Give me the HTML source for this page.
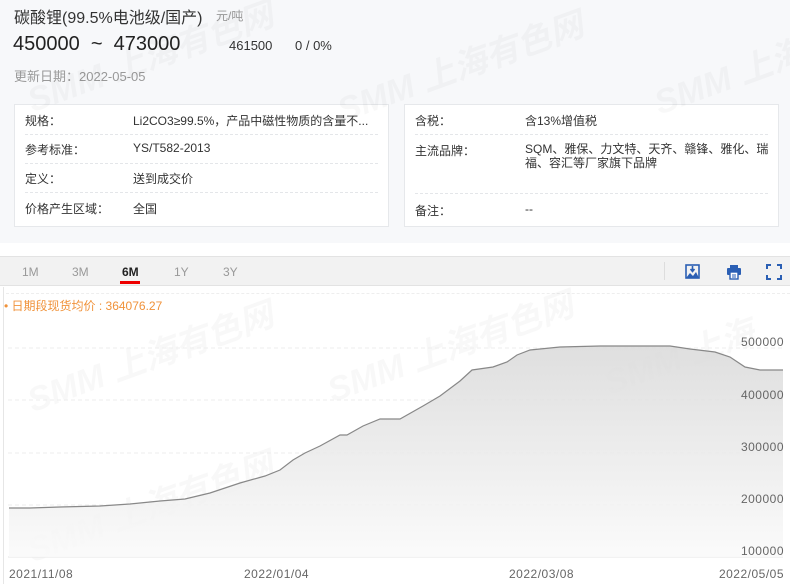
<!DOCTYPE html>
<html><head><meta charset="utf-8"><style>
*{margin:0;padding:0;box-sizing:border-box}
body{width:790px;height:584px;overflow:hidden;background:#fff;font-family:"Liberation Sans","Noto Sans CJK SC",sans-serif;color:#333;position:relative}
.top{position:absolute;left:0;top:0;width:790px;height:243px;background:#f7f8fa}
.abs{position:absolute;white-space:nowrap}
.card{position:absolute;background:#fff;border:1px solid #e6e8eb}
.row{position:absolute;left:10px;right:10px;border-bottom:1px dashed #e4e6e9;font-size:12px;color:#333}
.row span{position:absolute}
.wm{position:absolute;font-weight:bold;font-style:italic;color:rgba(0,0,0,0.028);font-size:34px;transform:rotate(-20deg);white-space:nowrap}
</style></head><body>
<div class="top"></div>
<div class="abs" style="left:14px;top:4px;font-size:16px;color:#333">碳酸锂(99.5%电池级/国产)</div>
<div class="abs" style="left:216px;top:7px;font-size:12px;color:#999">元/吨</div>
<div class="abs" style="left:13px;top:33px;font-size:20px;color:#222">450000 &nbsp;~ &nbsp;473000</div>
<div class="abs" style="left:229px;top:38px;font-size:13px;color:#333">461500</div>
<div class="abs" style="left:295px;top:38px;font-size:13px;color:#333">0 / 0%</div>
<div class="abs" style="left:14px;top:66px;font-size:13px;color:#999">更新日期：2022-05-05</div>

<div class="card" style="left:14px;top:104px;width:375px;height:123px">
<div class="row" style="top:0;height:30px"><span style="left:0;top:7px">规格：</span><span style="left:108px;top:7px">Li2CO3≥99.5%，产品中磁性物质的含量不...</span></div>
<div class="row" style="top:30px;height:29px"><span style="left:0;top:6px">参考标准：</span><span style="left:108px;top:6px">YS/T582-2013</span></div>
<div class="row" style="top:59px;height:29px"><span style="left:0;top:6px">定义：</span><span style="left:108px;top:6px">送到成交价</span></div>
<div class="row" style="top:88px;height:30px;border:none"><span style="left:0;top:7px">价格产生区域：</span><span style="left:108px;top:7px">全国</span></div>
</div>
<div class="card" style="left:404px;top:104px;width:375px;height:123px">
<div class="row" style="top:0;height:30px"><span style="left:0;top:7px">含税：</span><span style="left:110px;top:7px">含13%增值税</span></div>
<div class="row" style="top:30px;height:59px"><span style="left:0;top:7px">主流品牌：</span><span style="left:110px;top:7px;white-space:normal;width:245px;line-height:14px">SQM、雅保、力文特、天齐、赣锋、雅化、瑞福、容汇等厂家旗下品牌</span></div>
<div class="row" style="top:89px;height:30px;border:none"><span style="left:0;top:8px">备注：</span><span style="left:110px;top:8px">--</span></div>
</div>

<div style="position:absolute;left:0;top:256px;width:790px;height:30px;background:#f2f2f2;border-top:1px solid #e3e3e3;border-bottom:1px solid #e3e3e3"></div>
<div class="abs" style="left:22px;top:265px;font-size:12px;color:#999">1M</div>
<div class="abs" style="left:72px;top:265px;font-size:12px;color:#999">3M</div>
<div class="abs" style="left:122px;top:265px;font-size:12px;color:#222;font-weight:bold">6M</div>
<div style="position:absolute;left:120px;top:281px;width:20px;height:3px;background:#e00"></div>
<div class="abs" style="left:174px;top:265px;font-size:12px;color:#999">1Y</div>
<div class="abs" style="left:223px;top:265px;font-size:12px;color:#999">3Y</div>
<div style="position:absolute;left:664px;top:262px;width:1px;height:18px;background:#ddd"></div>
<svg style="position:absolute;left:685px;top:264px" width="16" height="16" viewBox="0 0 16 16"><rect x="1" y="1" width="13" height="13" fill="none" stroke="#2b5fb4" stroke-width="1.6"/><path d="M1 14 L5 9 L8 12 L11 8 L14 14Z" fill="#2b5fb4"/><path d="M7.5 2v5M5.5 5l2 2.5 2-2.5" stroke="#2b5fb4" stroke-width="1.6" fill="none"/></svg>
<svg style="position:absolute;left:726px;top:264px" width="16" height="16" viewBox="0 0 16 16"><rect x="4" y="1" width="8" height="3" fill="#2b5fb4"/><rect x="1" y="4" width="14" height="7" rx="1" fill="#2b5fb4"/><rect x="4" y="8" width="8" height="7" fill="#fff" stroke="#2b5fb4" stroke-width="1.4"/><path d="M6 11h4M6 13h4" stroke="#2b5fb4"/></svg>
<svg style="position:absolute;left:766px;top:264px" width="16" height="16" viewBox="0 0 16 16" fill="none" stroke="#2b5fb4" stroke-width="2"><path d="M1 5V1h4M11 1h4v4M15 11v4h-4M5 15H1v-4"/></svg>

<div style="position:absolute;left:3px;top:287px;width:1px;height:297px;background:#e6e6e6"></div>
<div style="position:absolute;left:6px;top:293px;width:784px;border-top:1px dashed #eee"></div>
<div class="abs" style="left:4px;top:297px;font-size:12px;color:#f0923a">• 日期段现货均价 : 364076.27</div>

<div class="wm" style="left:20px;top:480px">SMM 上海有色网</div>
<div class="wm" style="left:320px;top:320px">SMM 上海有色网</div>
<div class="wm" style="left:20px;top:330px">SMM 上海有色网</div>
<div class="wm" style="left:600px;top:330px">SMM 上海</div>
<div class="wm" style="left:20px;top:30px">SMM 上海有色网</div>
<div class="wm" style="left:330px;top:40px">SMM 上海有色网</div>
<div class="wm" style="left:650px;top:50px">SMM 上海</div>

<svg style="position:absolute;left:0;top:320px" width="790" height="264">
<defs><linearGradient id="g" x1="0" y1="0" x2="0" y2="1"><stop offset="0" stop-color="#d9d9d9"/><stop offset="1" stop-color="#fafafa"/></linearGradient></defs>
<g stroke="#eeeeee" stroke-dasharray="4,3"><line x1="8" y1="28" x2="783" y2="28"/><line x1="8" y1="80" x2="783" y2="80"/><line x1="8" y1="133" x2="783" y2="133"/><line x1="8" y1="185" x2="783" y2="185"/></g>
<line x1="8" y1="237" x2="783" y2="237" stroke="#e6e6e6"/>
<path id="c" d="M9 188 L30 188 L60 187 L100 186 L130 184 L160 181 L185 179 L210 173 L240 163 L265 156 L280 150 L293 140 L305 133 L320 126 L340 115 L347 115 L363 106 L380 99 L400 99 L423 86 L440 76 L460 61 L472 50 L493 47 L507 42 L517 35 L530 30 L560 27 L600 26 L650 26 L670 26 L690 29 L715 32 L730 37 L745 47 L760 50 L783 50" fill="none"/>
<path d="M9 188 L30 188 L60 187 L100 186 L130 184 L160 181 L185 179 L210 173 L240 163 L265 156 L280 150 L293 140 L305 133 L320 126 L340 115 L347 115 L363 106 L380 99 L400 99 L423 86 L440 76 L460 61 L472 50 L493 47 L507 42 L517 35 L530 30 L560 27 L600 26 L650 26 L670 26 L690 29 L715 32 L730 37 L745 47 L760 50 L783 50 L783 237 L9 237Z" fill="url(#g)" opacity="0.85"/>
<use href="#c" stroke="#888" stroke-width="1.2"/>
<g font-family="Liberation Sans, sans-serif" font-size="12" fill="#666" letter-spacing="0.5">
<text x="784" y="26" text-anchor="end">500000</text>
<text x="784" y="79" text-anchor="end">400000</text>
<text x="784" y="131" text-anchor="end">300000</text>
<text x="784" y="183" text-anchor="end">200000</text>
<text x="784" y="235" text-anchor="end">100000</text>
<text x="9" y="258">2021/11/08</text>
<text x="244" y="258">2022/01/04</text>
<text x="509" y="258">2022/03/08</text>
<text x="784" y="258" text-anchor="end">2022/05/05</text>
</g>
</svg>
</body></html>
